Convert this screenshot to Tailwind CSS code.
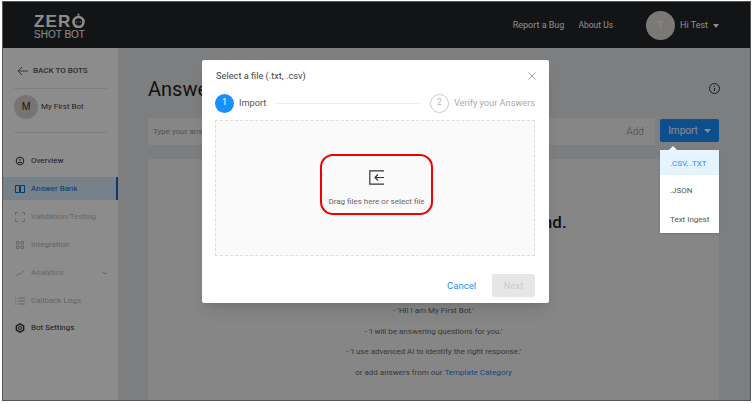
<!DOCTYPE html>
<html>
<head>
<meta charset="utf-8">
<script src="https://cdn.jsdelivr.net/npm/@tailwindcss/browser@4"></script>
</head>
<body class="bg-white font-['Roboto',sans-serif]">
<div class="relative w-[754px] h-[404px] overflow-hidden pt-px pl-[2px] pr-[3px] pb-[3px]">
  <div class="relative w-[749px] h-[400px] border border-[#555] overflow-hidden flex flex-col bg-[#e4e6e8]">
    <header class="h-[46px] shrink-0 bg-[#232528] flex items-center">
      <div class="w-[115px] pl-[31px] flex flex-col items-start text-white leading-none pt-[1px]">
        <div class="flex items-end h-[15px] mb-[2px]">
          <span class="text-[17px] font-bold tracking-[1.200px] font-['Liberation_Sans',sans-serif] leading-[12px]">ZER</span>
          <svg class="-ml-[1px]" width="15" height="16" viewBox="0 0 15 16" fill="none" stroke="#fff"><circle cx="7.500" cy="10" r="5" stroke-width="2.600"/><path d="M6 3.500h3L7.500 1z" fill="#fff" stroke="none"/><circle cx="5.800" cy="10" r=".7" fill="#fff" stroke="none"/><circle cx="9.200" cy="10" r=".7" fill="#fff" stroke="none"/></svg>
        </div>
        <span class="text-[10px] font-['Liberation_Sans',sans-serif] leading-[9px]">SHOT BOT</span>
      </div>
      <div class="ml-auto mt-[1px] flex items-center text-[9px] text-white">
        <span class="mr-[14px]">Report a Bug</span>
        <span class="mr-[33px] -mt-[1px] text-[8.500px]">About Us</span>
        <span class="-mt-[1px] w-[29px] h-[29px] rounded-full bg-[#e0dcd8] text-white text-[10px] flex items-center justify-center mr-[5px]">T</span>
        <span>Hi Test</span>
        <svg class="ml-[5px] mr-[31px]" width="6" height="4" viewBox="0 0 6 4"><path d="M0 0h6L3 4z" fill="#fff"/></svg>
      </div>
    </header>
    <div class="flex-1 flex min-h-0">
      <aside class="w-[115px] shrink-0 bg-white flex flex-col">
        <div class="h-[40px] flex items-center pt-[6px] pl-[14px] gap-[5px] text-[#555] shrink-0">
          <svg width="11" height="10" viewBox="0 0 11 10" fill="none" stroke="#666" stroke-width="1"><path d="M11 5H1M5 1 1 5l4 4"/></svg>
          <span class="text-[8px] font-medium">BACK TO BOTS</span>
        </div>
        <div class="mx-[11px] border-t border-[#e8e8e8]"></div>
        <div class="h-[43px] flex items-center pb-[8px] pl-[11px] gap-[3px] shrink-0">
          <span class="w-[24px] h-[24px] rounded-full bg-[#d9d4d0] flex items-center justify-center text-[10px] text-[#333]">M</span>
          <span class="text-[8px] text-[#444]">My First Bot</span>
        </div>
        <div class="mx-[11px] border-t border-[#e8e8e8]"></div>
        <nav class="mt-[16px] flex flex-col text-[8px]">
          <div class="h-[23px] flex items-center pl-[12px] gap-[6px] text-[#333]">
            <svg width="10" height="10" viewBox="0 0 10 10" fill="none" stroke="#333"><circle cx="5" cy="5" r="3.800"/><path d="M3 6.500h4M5 5V3"/></svg><span>Overview</span>
          </div>
          <div class="mt-[5px] h-[23px] flex items-center pl-[12px] gap-[6px] text-[#0a6bd1] bg-[#d8ebfb] border-r-2 border-[#0a6bd1]">
            <svg width="10" height="10" viewBox="0 0 10 10" fill="none" stroke="#0a6bd1"><path d="M.5 1.500h4v7h-4zM5.500 1.500h4v7h-4z"/></svg><span>Answer Bank</span>
          </div>
          <div class="mt-[5px] h-[23px] flex items-center pl-[12px] gap-[6px] text-[#bbb]">
            <svg width="10" height="10" viewBox="0 0 10 10" fill="none" stroke="#bbb"><path d="M.5 3V.5H3M7 .5h2.500V3M9.500 7v2.500H7M3 9.500H.5V7"/></svg><span>Validation/Testing</span>
          </div>
          <div class="mt-[5px] h-[23px] flex items-center pl-[12px] gap-[6px] text-[#bbb]">
            <svg width="10" height="10" viewBox="0 0 10 10" fill="none" stroke="#bbb"><path d="M1.500 1.500h2.500v2.500h-2.500zM6 1.500h2.500v2.500H6zM1.500 6h2.500v2.500h-2.500zM6 6h2.500v2.500H6z"/></svg><span>Integration</span>
          </div>
          <div class="mt-[5px] h-[23px] flex items-center pl-[12px] gap-[6px] text-[#bbb]">
            <svg width="10" height="10" viewBox="0 0 10 10" fill="none" stroke="#bbb"><path d="M.5 8.500l3-3 1.500 1L9 2.500"/></svg><span>Analytics</span>
            <svg class="ml-auto mr-[10px]" width="6" height="4" viewBox="0 0 6 4" fill="none" stroke="#bbb"><path d="M.5.5 3 3 5.500.5"/></svg>
          </div>
          <div class="mt-[5px] h-[23px] flex items-center pl-[12px] gap-[6px] text-[#bbb]">
            <svg width="10" height="10" viewBox="0 0 10 10" fill="none" stroke="#bbb"><path d="M3 2h7M3 5h7M3 8h7M0 2h1.500M0 5h1.500M0 8h1.500"/></svg><span>Callback Logs</span>
          </div>
          <div class="mt-[4px] h-[23px] flex items-center pl-[12px] gap-[6px] text-[#333]">
            <svg width="10" height="10" viewBox="0 0 10 10" fill="none" stroke="#333"><circle cx="5" cy="5" r="1.500"/><path d="M5 .8 8.600 2.900v4.200L5 9.200 1.400 7.100V2.900z" stroke-width="1.500"/></svg><span>Bot Settings</span>
          </div>
        </nav>
      </aside>
      <main class="flex-1 min-w-0 pl-[30px] pr-[31px]">
        <div class="h-[70px] pt-[11px] flex items-center justify-between">
          <h1 class="text-[20px] text-[#222]">Answer Bank</h1>
          <svg class="mr-[-1px]" width="11" height="11" viewBox="0 0 11 11" fill="none" stroke="#333"><circle cx="5.500" cy="5.500" r="5"/><path d="M5.500 5v3M5.500 2.500v1.200"/></svg>
        </div>
        <div class="flex h-[27px] gap-[5px]">
          <div class="w-[507px] bg-[#f5f5f5] flex items-center justify-between px-[5px] pr-[11px] text-[8px] text-[#999]">
            <span>Type your answer</span><span class="text-[10px] text-[#aaa]">Add</span>
          </div>
          <div class="w-[59px] h-[23px] mt-[1px] rounded-[2px] bg-[#1890ff] text-white text-[10px] flex items-center justify-center gap-[6px]">Import
            <svg width="7" height="4" viewBox="0 0 7 4"><path d="M0 0h7L3.500 4z" fill="#fff"/></svg>
          </div>
        </div>
        <div class="mt-[14px] h-[300px] bg-[#f5f5f5] flex flex-col items-center text-[8px] text-[#666]">
          <p class="mt-[54px] -ml-[3px] text-[17px] font-medium text-[#222] leading-[18px]">Sorry, no answers have been found.</p>
          <span class="mt-[69px] h-[21px] flex items-center">- 'Hi! I am My First Bot.'</span>
          <span class="h-[21px] flex items-center">- 'I will be answering questions for you.'</span>
          <span class="h-[20px] flex items-center">- 'I use advanced AI to identify the right response.'</span>
          <span class="h-[21px] flex items-center">or add answers from our&nbsp;<span class="text-[#2a7fe8]">Template Category</span></span>
        </div>
      </main>
    </div>
    <div class="absolute inset-0 bg-black/45"></div>
    <div class="absolute left-[657px] top-[148px] w-[59px] h-[83px] bg-white shadow text-[8px] flex flex-col text-[#555]">
      <span class="absolute -top-[4px] left-[9px] w-0 h-0 border-x-[4px] border-x-transparent border-b-[4px] border-b-white"></span>
      <span class="h-[25px] pt-[2px] bg-[#e6f4ff] text-[#1890ff] flex items-center pl-[10px]">.CSV, .TXT</span>
      <span class="h-[29px] pt-[3px] flex items-center pl-[10px]">.JSON</span>
      <span class="h-[29px] pt-[2px] flex items-center pl-[10px]">Text Ingest</span>
    </div>
    <div class="absolute left-[199px] top-[58px] w-[347px] h-[243px] bg-white rounded-[2px] shadow-lg pl-[13px] pr-[14px] flex flex-col">
      <div class="h-[31px] flex items-center justify-between">
        <span class="ml-[1px] text-[9.250px] text-[#444]">Select a file (.txt, .csv)</span>
        <svg class="-mr-[1px]" width="8" height="8" viewBox="0 0 8 8" stroke="#888" stroke-width="0.800"><path d="M.5.5l7 7M7.500.5l-7 7"/></svg>
      </div>
      <div class="h-[22px] flex items-center mt-[1px]">
        <span class="w-[19px] h-[19px] rounded-full bg-[#1890ff] text-white text-[9px] flex items-center justify-center">1</span>
        <span class="ml-[5px] text-[9.200px] text-[#555]">Import</span>
        <span class="flex-1 ml-[9px] mr-[9px] border-t border-[#eee]"></span>
        <span class="w-[19px] h-[19px] rounded-full border border-[#ccc] text-[#bbb] text-[9px] flex items-center justify-center">2</span>
        <span class="ml-[5px] text-[9.200px] text-[#aaa]">Verify your Answers</span>
      </div>
      <div class="mt-[6px] h-[136px] border border-dashed border-[#ddd] bg-[#fafafa] flex items-center justify-center">
        <div class="ml-[3px] -mt-[7px] w-[113px] h-[61px] border-[2px] border-[#f00000] rounded-[13px] flex flex-col items-center text-[8px] text-[#666]">
          <svg class="mt-[14px] mb-[11px] shrink-0" width="15" height="15" viewBox="0 0 15 15" fill="none" stroke="#333" stroke-width="1.200"><path d="M15 .8H.8v13.400H15M15 7.500H6M9 4.500 6 7.500l3 3"/></svg>
          <span class="leading-[12px]">Drag files here or select file</span>
        </div>
      </div>
      <div class="mt-[18px] flex justify-end items-center">
        <span class="text-[9.500px] pt-[1px] text-[#1890ff] mr-[16px]">Cancel</span>
        <span class="w-[43px] h-[23px] pt-[1px] bg-[#e6e6e6] rounded-[2px] flex items-center justify-center text-[9.500px] text-[#ccc]">Next</span>
      </div>
    </div>
  </div>
</div>
</body>
</html>
